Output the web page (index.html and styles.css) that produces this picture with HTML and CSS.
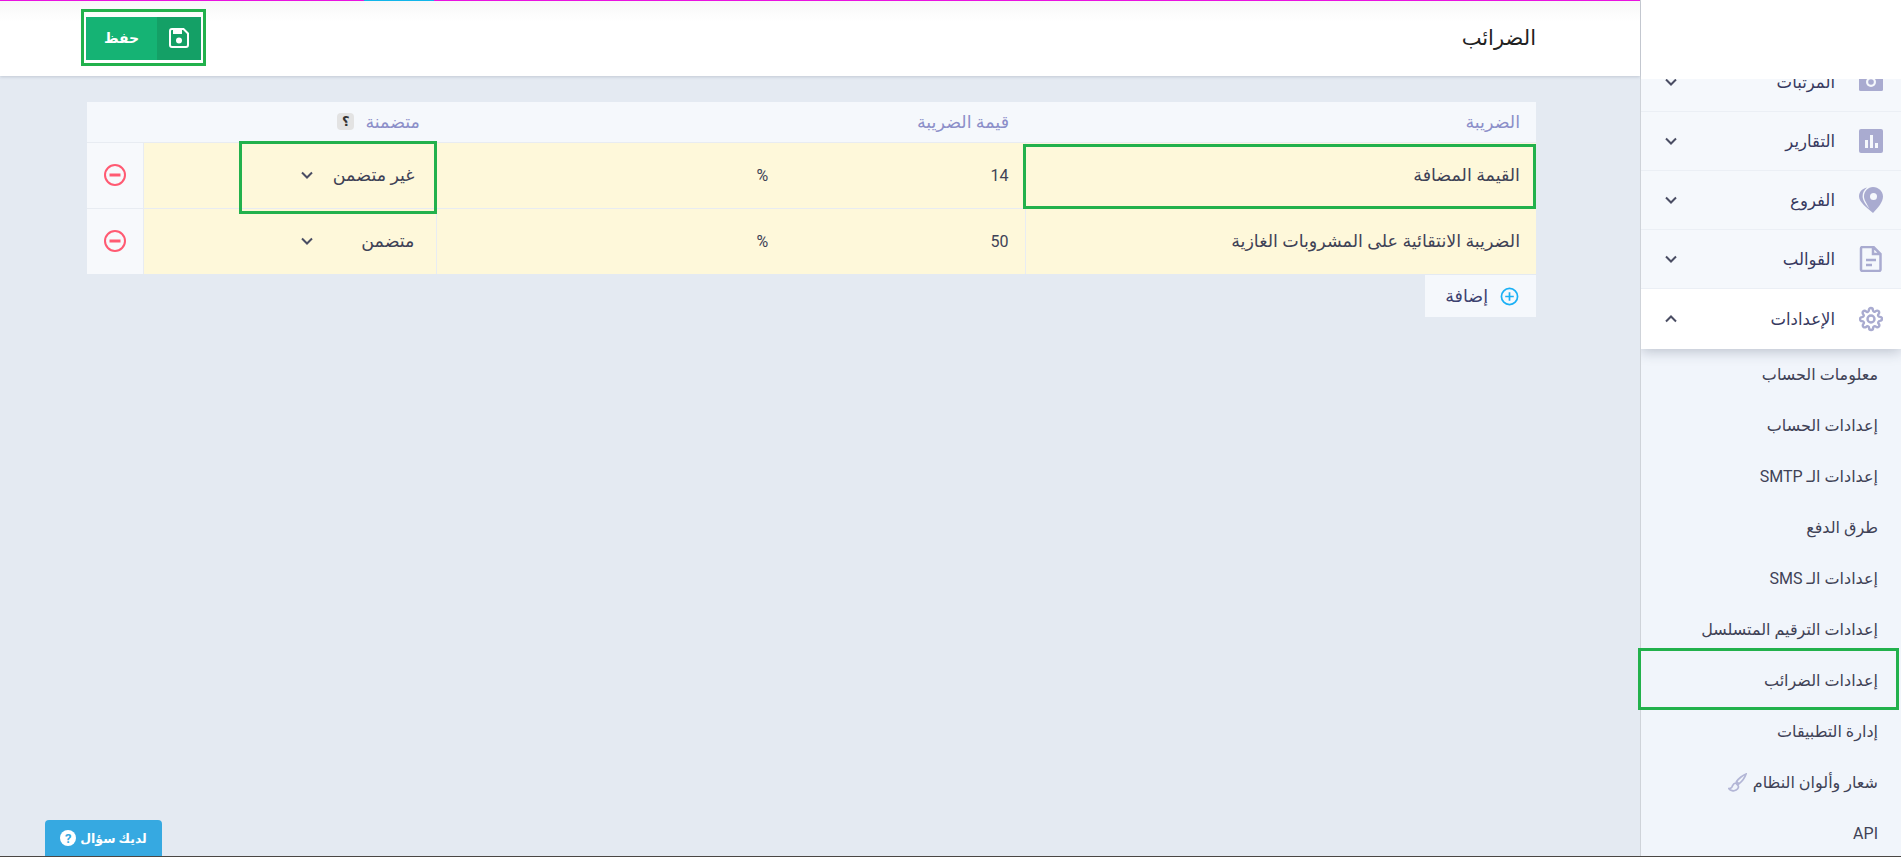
FILE: index.html
```html
<!DOCTYPE html>
<html lang="ar" dir="rtl">
<head>
    <meta charset="UTF-8">
    <meta name="viewport" content="width=device-width, initial-scale=1.0">
    <title>الضرائب</title>
    <link rel="stylesheet" href="styles.css">
</head>
<body>
    <div class="page">
        <aside class="sidebar">
            <div class="logo-box"></div>
            <div class="menu">
                <div class="menu-list">
                    <div class="menu-row">
                        <svg class="menu-icon" viewBox="0 0 24 26"><rect x="0" y="4" width="24" height="18" rx="1.5" fill="#a9abd0"/><circle cx="12" cy="13" r="5" fill="#f5f8fc"/><circle cx="12" cy="13" r="2.800" fill="#a9abd0"/></svg>
                        <span class="menu-label">المرتبات</span>
                        <svg class="chev" viewBox="0 0 12 8"><path d="M1 1.5l5 5 5-5"/></svg>
                    </div>
                    <div class="menu-row">
                        <svg class="menu-icon" viewBox="0 0 24 26"><rect x="0" y="1" width="24" height="24" rx="2" fill="#a9abd0"/><path d="M6 12v8h3v-8zM11 7v13h3V7zM16 15v5h3v-5z" fill="#f5f8fc"/></svg>
                        <span class="menu-label">التقارير</span>
                        <svg class="chev" viewBox="0 0 12 8"><path d="M1 1.5l5 5 5-5"/></svg>
                    </div>
                    <div class="menu-row">
                        <svg class="menu-icon" viewBox="0 0 24 26"><path d="M14 0c5.500 0 10 4.300 10 9.500 0 5.500-5 11.500-10 16.500C8 21 0 15 0 9.500 0 5 3.500 1.500 8 .6 5 3 3.600 6 3.600 9.500c0 4 3.400 8.400 6.800 12.200C7.600 16 5 13 5 9.500 5 4.300 9 0 14 0z" fill="#a9abd0"/><circle cx="14.500" cy="9.500" r="3.500" fill="#f5f8fc"/></svg>
                        <span class="menu-label">الفروع</span>
                        <svg class="chev" viewBox="0 0 12 8"><path d="M1 1.5l5 5 5-5"/></svg>
                    </div>
                    <div class="menu-row">
                        <svg class="menu-icon" viewBox="0 0 24 26"><path d="M3.500 1h11l7 7v15.500a1.500 1.500 0 0 1-1.500 1.500H3.500A1.500 1.500 0 0 1 2 23.500v-21A1.500 1.500 0 0 1 3.500 1zM14 1v7h7M7 14h10M7 19h6" fill="none" stroke="#a9abd0" stroke-width="2.500"/></svg>
                        <span class="menu-label">القوالب</span>
                        <svg class="chev" viewBox="0 0 12 8"><path d="M1 1.5l5 5 5-5"/></svg>
                    </div>
                    <div class="menu-row active">
                        <svg class="menu-icon" viewBox="0 0 24 24"><circle cx="12" cy="12" r="3.500" fill="none" stroke="#a9abd0" stroke-width="2.400"/><path d="M19.400 15a1.650 1.650 0 0 0 .33 1.820l.06.06a2 2 0 1 1-2.830 2.830l-.06-.06a1.650 1.650 0 0 0-2.800 1.170V21a2 2 0 0 1-4 0v-.09a1.650 1.650 0 0 0-2.830-1.150l-.06.06a2 2 0 1 1-2.830-2.830l.06-.06a1.650 1.650 0 0 0-1.170-2.800H3a2 2 0 0 1 0-4h.09a1.650 1.650 0 0 0 1.150-2.830l-.06-.06a2 2 0 1 1 2.830-2.830l.06.06a1.650 1.650 0 0 0 2.800-1.170V3a2 2 0 0 1 4 0v.09a1.650 1.650 0 0 0 2.830 1.150l.06-.06a2 2 0 1 1 2.830 2.830l-.06.06a1.650 1.650 0 0 0 1.170 2.800H21a2 2 0 0 1 0 4h-.09a1.650 1.650 0 0 0-1.510 1z" fill="none" stroke="#a9abd0" stroke-width="2.400"/></svg>
                        <span class="menu-label">الإعدادات</span>
                        <svg class="chev" viewBox="0 0 12 8"><path d="M1 6.500l5-5 5 5"/></svg>
                    </div>
                </div>
                <div class="submenu">
                    <div class="sub-item">معلومات الحساب</div>
                    <div class="sub-item">إعدادات الحساب</div>
                    <div class="sub-item">إعدادات الـ SMTP</div>
                    <div class="sub-item">طرق الدفع</div>
                    <div class="sub-item">إعدادات الـ SMS</div>
                    <div class="sub-item">إعدادات الترقيم المتسلسل</div>
                    <div class="sub-item current">إعدادات الضرائب<span class="mark"></span></div>
                    <div class="sub-item">إدارة التطبيقات</div>
                    <div class="sub-item">شعار وألوان النظام
                        <svg class="brush" viewBox="0 0 20 20"><path d="M19 1c-3 1-8 5-10 8l2.500 2.500C14.500 9 18 4 19 1zM8 10.500c-3 .5-3 3-4 4.500-.7 1-2 1.500-3 1.500 1.500 2 5 3 7.500 1.500 2.500-1.500 3-3.500 2-5z" fill="none" stroke="#b3b6d6" stroke-width="1.800"/></svg>
                    </div>
                    <div class="sub-item">API</div>
                </div>
            </div>
        </aside>
        <main class="main">
            <header class="topbar">
                <h1 class="title">الضرائب</h1>
                <div class="save-btn">
                    <span class="save-icon">
                        <svg viewBox="0 0 20 20" width="20" height="20"><path d="M3 1h11.500L19 5.500V17a2 2 0 0 1-2 2H3a2 2 0 0 1-2-2V3a2 2 0 0 1 2-2z" fill="none" stroke="#fff" stroke-width="2"/><path d="M4 2h9v4H4z" fill="#fff"/><circle cx="10" cy="12.500" r="3" fill="#fff"/></svg>
                    </span>
                    <span class="save-text">حفظ</span>
                    <span class="mark"></span>
                </div>
            </header>
            <section class="content">
                <table class="tax-table">
                    <colgroup>
                        <col class="col-name">
                        <col class="col-value">
                        <col class="col-included">
                        <col class="col-delete">
                    </colgroup>
                    <thead>
                        <tr>
                            <th>الضريبة</th>
                            <th>قيمة الضريبة</th>
                            <th colspan="2"><span class="included-head">متضمنة <span class="hint">؟</span></span></th>
                        </tr>
                    </thead>
                    <tbody>
                        <tr>
                            <td class="name-cell">القيمة المضافة<span class="mark"></span></td>
                            <td><div class="value-box"><span>14</span><span>%</span></div></td>
                            <td class="select-cell">
                                <div class="select-box">
                                    <span class="select-text">غير متضمن</span>
                                    <svg class="chev" viewBox="0 0 12 8"><path d="M1 1.5l5 5 5-5"/></svg>
                                    <span class="mark"></span>
                                </div>
                            </td>
                            <td class="delete-cell">
                                <svg viewBox="0 0 24 24" width="24" height="24"><circle cx="12" cy="12" r="10" fill="none" stroke="#ff5a72" stroke-width="2"/><path d="M6.500 12h11" stroke="#ff5a72" stroke-width="3"/></svg>
                            </td>
                        </tr>
                        <tr>
                            <td>الضريبة الانتقائية على المشروبات الغازية</td>
                            <td><div class="value-box"><span>50</span><span>%</span></div></td>
                            <td class="select-cell">
                                <div class="select-box">
                                    <span class="select-text">متضمن</span>
                                    <svg class="chev" viewBox="0 0 12 8"><path d="M1 1.5l5 5 5-5"/></svg>
                                </div>
                            </td>
                            <td class="delete-cell">
                                <svg viewBox="0 0 24 24" width="24" height="24"><circle cx="12" cy="12" r="10" fill="none" stroke="#ff5a72" stroke-width="2"/><path d="M6.500 12h11" stroke="#ff5a72" stroke-width="3"/></svg>
                            </td>
                        </tr>
                    </tbody>
                </table>
                <div class="add-btn">
                    <svg viewBox="0 0 20 20" width="19" height="19"><circle cx="10" cy="10" r="8.500" fill="none" stroke="#1ab0f5" stroke-width="1.800"/><path d="M10 5.500v9M5.500 10h9" stroke="#1ab0f5" stroke-width="1.800"/></svg>
                    <span>إضافة</span>
                </div>
            </section>
            <div class="top-line"><span class="top-line-blue"></span></div>
        </main>
    </div>
    <div class="help-btn">
        <span>لديك سؤال</span>
        <span class="help-dot">?</span>
    </div>
</body>
</html>
```

FILE: styles.css
```css
* {
    margin: 0;
    padding: 0;
    box-sizing: border-box;
}
body {
    font-family: Roboto, "DejaVu Sans", sans-serif;
    background: #e4eaf2;
    color: #3f4256;
    height: 857px;
    overflow: hidden;
}
.page {
    display: flex;
    height: 857px;
    border-bottom: 1px solid #4a4744;
}
.mark {
    position: absolute;
    z-index: 3;
    border: 3px solid #22b14c;
    pointer-events: none;
}

/* sidebar */
.sidebar {
    width: 261px;
    flex: none;
    display: flex;
    flex-direction: column;
    background: #f1f5fb;
    border-left: 1px solid #cfd3d9;
}
.logo-box {
    height: 79px;
    flex: none;
    background: #fff;
    position: relative;
    z-index: 2;
}
.menu {
    flex: 1;
}
.menu-list {
    margin-top: -26px;
    position: relative;
    z-index: 1;
}
.menu-row {
    display: flex;
    align-items: center;
    height: 59px;
    padding: 0 18px 0 24px;
    background: #f5f8fc;
    border-bottom: 1px solid #ebeff5;
}
.menu-row.active {
    height: 60px;
    background: #fff;
    border-bottom: none;
    box-shadow: 0 3px 12px rgba(40, 50, 80, 0.25);
    clip-path: inset(0 0 -20px 0);
}
.menu-icon {
    width: 24px;
    height: 26px;
    flex: none;
}
.menu-label {
    flex: 1;
    margin-right: 24px;
    font-size: 16.5px;
    color: #37395f;
}
.chev {
    width: 12px;
    height: 8px;
    flex: none;
    fill: none;
    stroke: #4a4d63;
    stroke-width: 2;
}
.sub-item {
    position: relative;
    display: flex;
    align-items: center;
    gap: 6px;
    height: 51px;
    padding: 0 23px 0 0;
    font-size: 16px;
    color: #3f4256;
}
.sub-item.current .mark {
    top: -7px;
    bottom: -4px;
    left: -3px;
    right: 2px;
}
.brush {
    width: 19px;
    height: 19px;
}

/* main area */
.main {
    flex: 1;
    position: relative;
}
.top-line {
    position: absolute;
    top: 0;
    left: 0;
    right: 0;
    height: 1px;
    background: #e913e0;
}
.top-line-blue {
    position: absolute;
    left: 364px;
    width: 70px;
    height: 1px;
    background: #12b5ea;
}
.topbar {
    height: 76px;
    display: flex;
    justify-content: space-between;
    align-items: center;
    padding: 0 104px 0 86px;
    background: linear-gradient(#f7f7f7, #fff 22px);
    box-shadow: 0 1px 3px rgba(40, 50, 80, 0.18);
}
.title {
    font-size: 21px;
    font-weight: normal;
    color: #222;
}
.save-btn {
    position: relative;
    display: flex;
    width: 115px;
    height: 43px;
    background: #15b374;
    color: #fff;
    font-size: 14px;
    font-weight: bold;
}
.save-btn .mark {
    top: -8px;
    bottom: -6px;
    left: -5px;
    right: -5px;
}
.save-icon {
    width: 44px;
    display: flex;
    align-items: center;
    justify-content: center;
    background: #14a066;
}
.save-text {
    flex: 1;
    display: flex;
    align-items: center;
    justify-content: center;
}
.content {
    padding: 26px 104px 0 87px;
}
.tax-table {
    width: 100%;
    table-layout: fixed;
    border-collapse: collapse;
    font-size: 17.5px;
}
.col-name { width: 511px; }
.col-value { width: 589px; }
.col-delete { width: 56px; }
th {
    height: 40px;
    padding: 0 16px;
    text-align: right;
    font-weight: normal;
    font-size: 17.5px;
    color: #8c8fc9;
    background: #f5f8fc;
}
td {
    height: 66px;
    padding: 0 16px;
    background: #fef8da;
    border-top: 1px solid #e8ecf2;
    border-left: 1px solid #e8ecf2;
    position: relative;
}
.name-cell .mark {
    top: 1px;
    bottom: -1px;
    left: -3px;
    right: 0;
}
.value-box {
    display: flex;
    justify-content: space-between;
    padding-left: 304px;
    font-size: 16px;
}
.select-cell {
    padding: 0;
}
.select-box {
    position: relative;
    display: flex;
    align-items: center;
    width: 197px;
    height: 65px;
    padding: 0 21px 0 0;
}
.select-text {
    width: 102px;
    white-space: nowrap;
}
.select-box .mark {
    top: -2px;
    bottom: -6px;
    left: 0;
    right: -1px;
}
.delete-cell {
    padding: 0;
    text-align: center;
    background: #f7f9fc;
    border-left: none;
}
.delete-cell svg {
    display: block;
    margin: auto;
}
.included-head {
    display: inline-flex;
    align-items: center;
    gap: 11px;
}
.hint {
    width: 17px;
    height: 17px;
    display: flex;
    align-items: center;
    justify-content: center;
    background: #e3e3e3;
    border-radius: 4px;
    font-size: 13px;
    font-weight: bold;
    color: #333;
}
.add-btn {
    display: flex;
    align-items: center;
    gap: 12px;
    width: 111px;
    height: 42px;
    margin-top: 1px;
    padding: 0 17px 0 0;
    background: #f5f8fc;
    font-size: 17.5px;
    color: #3d4270;
}
.help-btn {
    position: fixed;
    left: 45px;
    bottom: 1px;
    display: flex;
    align-items: center;
    justify-content: center;
    gap: 4px;
    width: 117px;
    height: 36px;
    background: #36a9e1;
    color: #fff;
    font-size: 12.5px;
    font-weight: bold;
    border-radius: 4px 4px 0 0;
}
.help-dot {
    width: 16px;
    height: 16px;
    border-radius: 50%;
    background: #fff;
    color: #36a9e1;
    font-size: 13px;
    display: flex;
    align-items: center;
    justify-content: center;
}
```
